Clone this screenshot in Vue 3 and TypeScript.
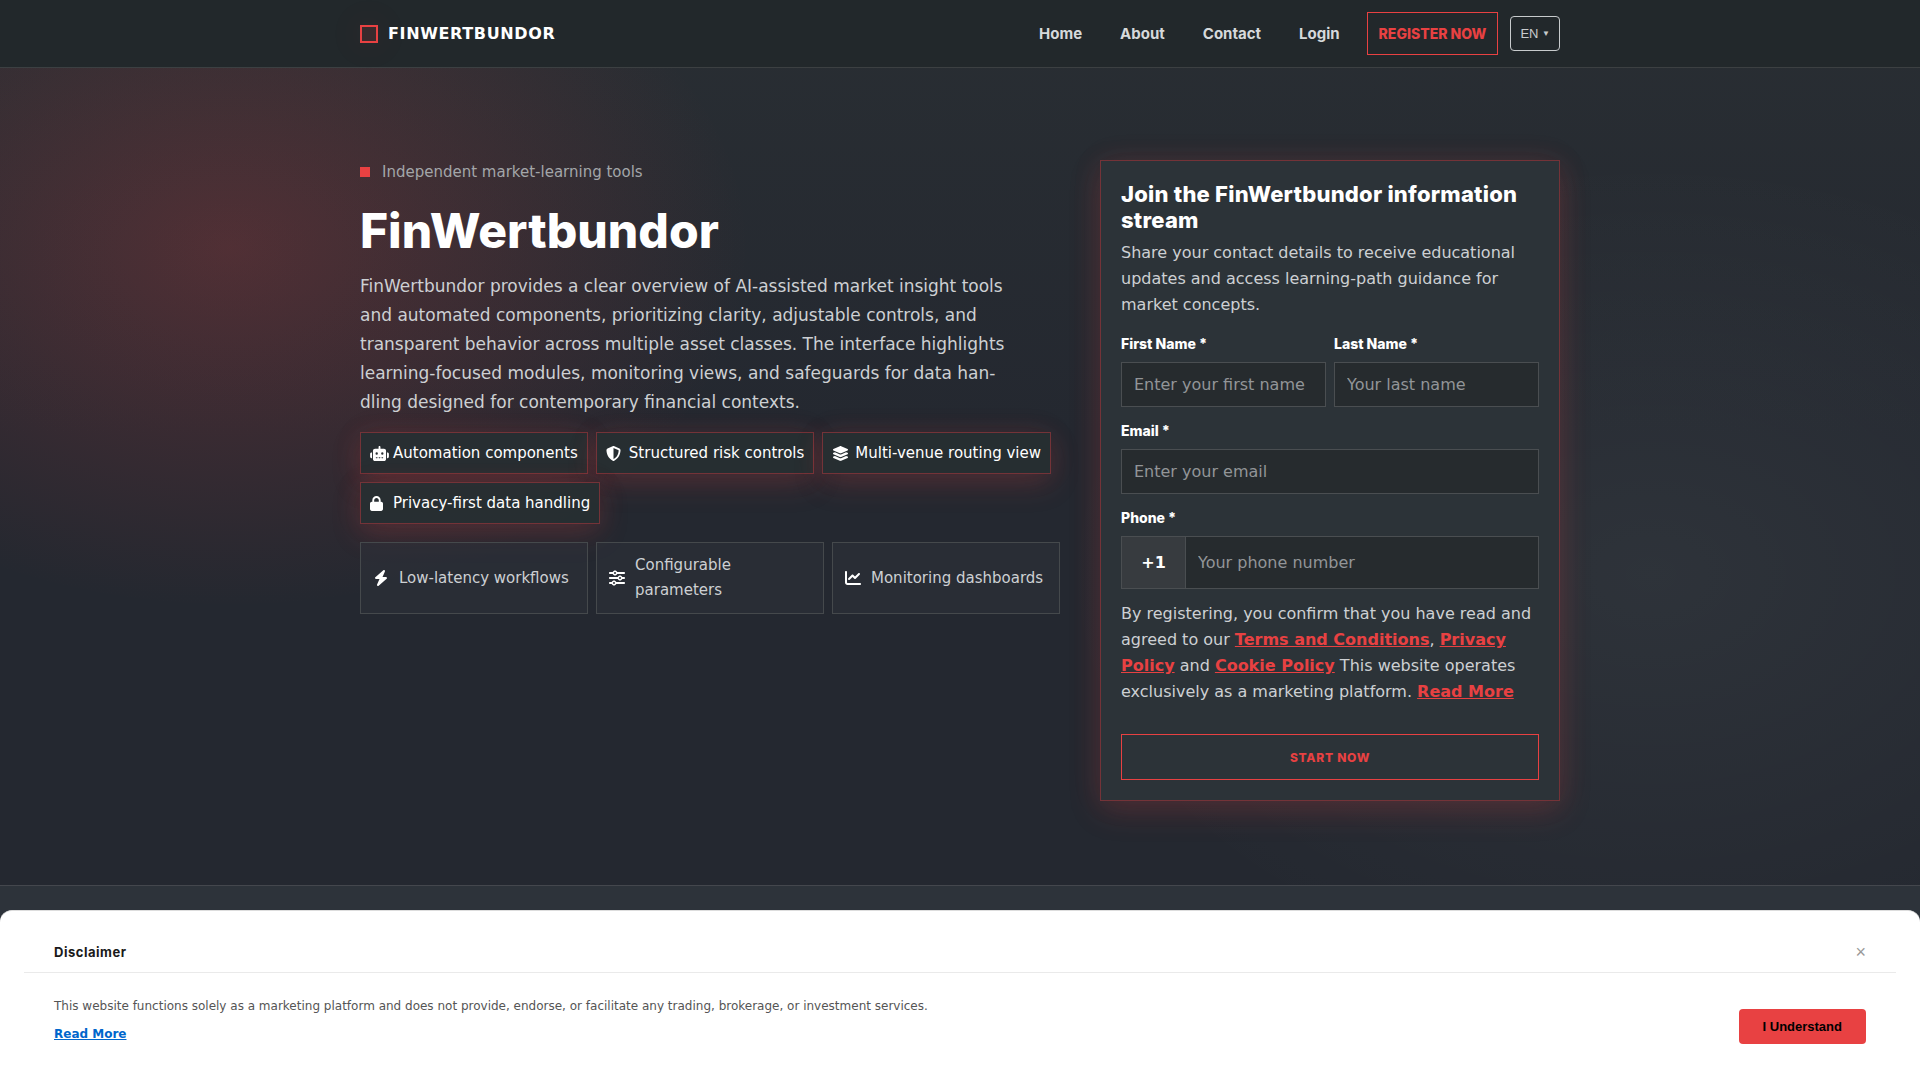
<script setup lang="ts">
import { ref } from 'vue'

interface Badge {
  icon: string
  box: string
  width: number
  label: string
}

const nav = ['Home', 'About', 'Contact', 'Login']

const chips: Badge[] = [
  {
    label: 'Automation components',
    box: '0 0 640 512',
    width: 19,
    icon: 'M320 0c17.7 0 32 14.300 32 32V96H472c39.800 0 72 32.200 72 72V440c0 39.800-32.200 72-72 72H168c-39.800 0-72-32.200-72-72V168c0-39.800 32.200-72 72-72H288V32c0-17.700 14.300-32 32-32zM208 384c-8.800 0-16 7.200-16 16s7.200 16 16 16h32c8.800 0 16-7.200 16-16s-7.200-16-16-16H208zm96 0c-8.800 0-16 7.200-16 16s7.200 16 16 16h32c8.800 0 16-7.200 16-16s-7.200-16-16-16H304zm96 0c-8.800 0-16 7.200-16 16s7.200 16 16 16h32c8.800 0 16-7.200 16-16s-7.200-16-16-16H400zM264 256a40 40 0 1 0-80 0 40 40 0 1 0 80 0zm152 40a40 40 0 1 0 0-80 40 40 0 1 0 0 80zM48 224H64V416H48c-26.500 0-48-21.500-48-48V272c0-26.500 21.500-48 48-48zm544 0c26.500 0 48 21.500 48 48v96c0 26.500-21.500 48-48 48H576V224h16z',
  },
  {
    label: 'Structured risk controls',
    box: '0 0 512 512',
    width: 15,
    icon: 'M256 0c4.600 0 9.200 1 13.400 2.900L457.700 82.800c22 9.300 38.400 31 38.300 57.200c-.5 99.200-41.300 280.700-213.600 363.200c-16.700 8-36.100 8-52.800 0C57.300 420.700 16.500 239.200 16 140c-.1-26.200 16.300-47.900 38.300-57.200L242.700 2.900C246.800 1 251.400 0 256 0zm0 66.800V444.800C394 378 431.100 230.100 432 141.400L256 66.800z',
  },
  {
    label: 'Multi-venue routing view',
    box: '0 0 576 512',
    width: 17,
    icon: 'M264.500 5.200c14.900-6.900 32.100-6.900 47 0l218.600 101c8.500 3.900 13.900 12.400 13.900 21.800s-5.400 17.900-13.900 21.800l-218.600 101c-14.900 6.900-32.100 6.900-47 0L45.900 149.800C37.400 145.800 32 137.300 32 128s5.400-17.900 13.900-21.800L264.500 5.200zM476.900 209.600l53.200 24.600c8.500 3.900 13.900 12.400 13.900 21.800s-5.400 17.900-13.900 21.800l-218.600 101c-14.900 6.900-32.100 6.900-47 0L45.900 277.800C37.400 273.800 32 265.300 32 256s5.400-17.900 13.900-21.800l53.200-24.600 152 70.200c23.400 10.800 50.400 10.800 73.800 0l152-70.200zm-152 198.200l152-70.200 53.200 24.600c8.500 3.900 13.900 12.400 13.900 21.800s-5.400 17.900-13.900 21.800l-218.600 101c-14.900 6.900-32.100 6.900-47 0L45.900 405.800C37.400 401.800 32 393.300 32 384s5.400-17.900 13.900-21.800l53.200-24.600 152 70.200c23.400 10.800 50.400 10.800 73.800 0z',
  },
  {
    label: 'Privacy-first data handling',
    box: '0 0 448 512',
    width: 13,
    icon: 'M144 144v48H304V144c0-44.200-35.800-80-80-80s-80 35.800-80 80zM80 192V144C80 64.500 144.500 0 224 0s144 64.500 144 144v48h16c35.300 0 64 28.700 64 64V448c0 35.300-28.700 64-64 64H64c-35.300 0-64-28.700-64-64V256c0-35.300 28.700-64 64-64H80z',
  },
]

const tiles: Badge[] = [
  {
    label: 'Low-latency workflows',
    box: '0 0 448 512',
    width: 14,
    icon: 'M349.400 44.600c5.900-13.700 1.500-29.700-10.600-38.500s-28.600-8-39.900 1.800l-256 224c-10 8.800-13.600 22.900-8.900 35.300S50.700 288 64 288H175.500L98.600 467.400c-5.900 13.700-1.500 29.700 10.600 38.500s28.600 8 39.900-1.800l256-224c10-8.800 13.600-22.900 8.900-35.300s-16.600-20.700-30-20.700H272.500L349.400 44.600z',
  },
  {
    label: 'Configurable parameters',
    box: '0 0 512 512',
    width: 16,
    icon: 'M0 416c0 17.700 14.300 32 32 32l54.700 0c12.300 28.300 40.500 48 73.300 48s61-19.700 73.300-48L480 448c17.700 0 32-14.300 32-32s-14.300-32-32-32l-246.700 0c-12.300-28.300-40.500-48-73.300-48s-61 19.700-73.300 48L32 384c-17.700 0-32 14.300-32 32zm128 0a32 32 0 1 1 64 0 32 32 0 1 1-64 0zM320 256a32 32 0 1 1 64 0 32 32 0 1 1-64 0zm32-80c-32.800 0-61 19.700-73.300 48L32 224c-17.700 0-32 14.300-32 32s14.300 32 32 32l246.700 0c12.300 28.300 40.500 48 73.300 48s61-19.700 73.300-48l54.700 0c17.700 0 32-14.300 32-32s-14.300-32-32-32l-54.700 0c-12.300-28.300-40.500-48-73.300-48zM192 128a32 32 0 1 1 0-64 32 32 0 1 1 0 64zm73.300-64C253 35.700 224.800 16 192 16s-61 19.700-73.300 48L32 64C14.300 64 0 78.300 0 96s14.300 32 32 32l86.700 0c12.300 28.300 40.500 48 73.300 48s61-19.700 73.300-48L480 128c17.700 0 32-14.300 32-32s-14.300-32-32-32L265.300 64z',
  },
  {
    label: 'Monitoring dashboards',
    box: '0 0 512 512',
    width: 16,
    icon: 'M64 64c0-17.700-14.300-32-32-32S0 46.300 0 64V400c0 44.200 35.800 80 80 80H480c17.700 0 32-14.300 32-32s-14.300-32-32-32H80c-8.800 0-16-7.200-16-16V64zm406.600 86.600c12.500-12.500 12.500-32.800 0-45.300s-32.800-12.500-45.300 0L320 210.700l-57.400-57.400c-12.500-12.500-32.800-12.500-45.300 0l-112 112c-12.500 12.500-12.500 32.800 0 45.300s32.800 12.500 45.300 0L240 221.300l57.400 57.400c12.500 12.500 32.800 12.500 45.300 0l128-128z',
  },
]

const firstName = ref('')
const lastName = ref('')
const email = ref('')
const phone = ref('')
const showDisclaimer = ref(true)
</script>

<template>
  <div class="page">
    <header class="topbar">
      <div class="wrap topbar-row">
        <a class="brand" href="#"><span class="brand-mark"></span>FINWERTBUNDOR</a>
        <nav class="nav">
          <div class="nav-links">
            <a v-for="item in nav" :key="item" class="nav-link" href="#">{{ item }}</a>
          </div>
          <a class="register" href="#">REGISTER NOW</a>
          <button class="lang" type="button">EN <span class="caret">▼</span></button>
        </nav>
      </div>
    </header>

    <main class="hero">
      <div class="wrap hero-grid">
        <section class="intro">
          <p class="eyebrow"><span class="dot"></span>Independent market-learning tools</p>
          <h1>FinWertbundor</h1>
          <p class="lead">
            FinWertbundor provides a clear overview of AI-assisted market insight tools and automated
            components, prioritizing clarity, adjustable controls, and transparent behavior across
            multiple asset classes. The interface highlights learning-focused modules, monitoring
            views, and safeguards for data han&shy;dling designed for contemporary financial contexts.
          </p>
          <ul class="chips">
            <li v-for="chip in chips" :key="chip.label" class="chip">
              <span class="chip-icon">
                <svg :viewBox="chip.box" :width="chip.width" height="15" aria-hidden="true"><path :d="chip.icon" /></svg>
              </span>
              {{ chip.label }}
            </li>
          </ul>
          <ul class="tiles">
            <li v-for="tile in tiles" :key="tile.label" class="tile">
              <span class="tile-icon">
                <svg :viewBox="tile.box" :width="tile.width" height="16" aria-hidden="true"><path :d="tile.icon" /></svg>
              </span>
              <span>{{ tile.label }}</span>
            </li>
          </ul>
        </section>

        <form class="card" @submit.prevent>
          <h2>Join the FinWertbundor information stream</h2>
          <p class="copy">
            Share your contact details to receive educational updates and access learning-path guidance
            for market concepts.
          </p>
          <div class="name-row">
            <div class="field">
              <label for="first">First Name *</label>
              <input id="first" v-model="firstName" class="box" type="text" placeholder="Enter your first name" />
            </div>
            <div class="field">
              <label for="last">Last Name *</label>
              <input id="last" v-model="lastName" class="box" type="text" placeholder="Your last name" />
            </div>
          </div>
          <div class="field">
            <label for="email">Email *</label>
            <input id="email" v-model="email" class="box" type="email" placeholder="Enter your email" />
          </div>
          <div class="field">
            <label for="phone">Phone *</label>
            <div class="phone">
              <span class="prefix">+1</span>
              <input id="phone" v-model="phone" type="tel" placeholder="Your phone number" />
            </div>
          </div>
          <p class="copy terms">
            By registering, you confirm that you have read and agreed to our
            <a href="#">Terms and Conditions</a>, <a href="#">Privacy Policy</a> and
            <a href="#">Cookie Policy</a> This website operates exclusively as a marketing platform.
            <a href="#">Read More</a>
          </p>
          <button class="submit" type="submit">START NOW</button>
        </form>
      </div>
    </main>

    <section class="next"></section>

    <aside v-if="showDisclaimer" class="disclaimer">
      <div class="disclaimer-head">
        <h3>Disclaimer</h3>
        <button class="close" type="button" aria-label="Close" @click="showDisclaimer = false">×</button>
      </div>
      <div class="disclaimer-body">
        <div>
          <p>
            This website functions solely as a marketing platform and does not provide, endorse, or
            facilitate any trading, brokerage, or investment services.
          </p>
          <a href="#">Read More</a>
        </div>
        <button class="accept" type="button" @click="showDisclaimer = false">I Understand</button>
      </div>
    </aside>
  </div>
</template>

<style>
body {
  background: #242830;
}
</style>

<style scoped>
* {
  box-sizing: border-box;
  margin: 0;
}

.page {
  --red: #e84142;
  --soft: #cdd0d3;
  --glow: 0 10px 30px rgba(232, 65, 66, 0.18), 0 0 30px rgba(232, 65, 66, 0.08);
  --display: Inter, "Liberation Sans", sans-serif;
  display: flex;
  flex-direction: column;
  min-height: 100vh;
  background: linear-gradient(#292e33, #242830 40%);
  color: var(--soft);
  font: 16px/26px "DejaVu Sans", sans-serif;
}

ul {
  list-style: none;
  padding: 0;
}

svg {
  display: block;
  flex: none;
  fill: #fff;
}

.wrap {
  width: 100%;
  max-width: 1248px;
  margin: 0 auto;
  padding: 0 24px;
}

.topbar {
  background: #22282b;
  border-bottom: 1px solid #3c4042;
}

.topbar-row {
  display: flex;
  align-items: center;
  justify-content: space-between;
  padding-top: 12px;
  padding-bottom: 12px;
}

.brand {
  display: flex;
  align-items: center;
  gap: 10px;
  color: #fff;
  font-weight: 700;
  letter-spacing: 0.04em;
  line-height: 24px;
  text-decoration: none;
}

.brand-mark {
  width: 18px;
  height: 18px;
  border: 2px solid var(--red);
  background: rgba(232, 65, 66, 0.12);
  box-shadow: 0 0 36px rgba(232, 65, 66, 0.12);
}

.nav {
  display: flex;
  align-items: center;
  font: 700 15px/25px var(--display);
}

.nav-links {
  display: flex;
  gap: 38px;
  margin-right: 27px;
}

.nav-link {
  color: #d6d9db;
  text-decoration: none;
}

.register {
  padding: 8px 11px;
  border: 1px solid var(--red);
  color: var(--red);
  font-size: 14px;
  font-weight: 800;
  text-decoration: none;
}

.lang {
  height: 35px;
  margin-left: 12px;
  padding: 0 9px;
  border: 1px solid #c8cbcd;
  border-radius: 4px;
  background: none;
  color: #c8cbcd;
  font: 13px "Liberation Sans", sans-serif;
}

.caret {
  font-size: 8px;
  vertical-align: 2px;
}

.hero {
  padding: 92px 0 84px;
  background:
    radial-gradient(520px 360px at 12% 22%, rgba(232, 65, 66, 0.22), transparent),
    radial-gradient(600px 420px at 86% 62%, rgba(230, 255, 240, 0.05), transparent);
}

.hero-grid {
  display: grid;
  grid-template-columns: minmax(0, 1fr) 460px;
  gap: 40px;
  align-items: start;
}

.eyebrow {
  display: flex;
  align-items: center;
  gap: 12px;
  color: #a3a6a9;
  font-size: 15px;
  line-height: 24px;
}

.dot {
  width: 10px;
  height: 10px;
  background: var(--red);
}

h1 {
  margin: 20px 0 15px;
  color: #fff;
  font: 800 48px/53px var(--display);
}

.lead {
  max-width: 656px;
  font-size: 17px;
  line-height: 29px;
}

.chips {
  display: flex;
  flex-wrap: wrap;
  gap: 8px;
  margin-top: 15px;
}

.chip {
  display: flex;
  align-items: center;
  gap: 8px;
  padding: 8px 9px;
  border: 1px solid #743338;
  background: rgba(39, 47, 50, 0.92);
  box-shadow: var(--glow);
  color: #fff;
  font-size: 15px;
  line-height: 24px;
}

.chip-icon {
  display: flex;
  width: 15px;
}

.tiles {
  display: grid;
  grid-template-columns: repeat(3, minmax(0, 1fr));
  gap: 8px;
  margin-top: 18px;
}

.tile {
  display: flex;
  align-items: center;
  gap: 10px;
  padding: 10px 12px;
  border: 1px solid #45494c;
  background: rgba(45, 50, 58, 0.55);
  font-size: 15px;
  line-height: 25px;
}

.tile-icon {
  display: flex;
  flex: none;
  justify-content: center;
  width: 16px;
}

.card {
  padding: 20px;
  border: 1px solid #743338;
  background: #2c3338;
  box-shadow: var(--glow);
}

h2 {
  color: #fff;
  font: 800 22px/26px var(--display);
  letter-spacing: 0.01em;
}

.copy {
  margin-top: 7px;
}

.name-row {
  display: grid;
  grid-template-columns: 1fr 1fr;
  gap: 8px;
  padding-top: 2px;
}

.field {
  margin-top: 14px;
}

label {
  display: block;
  margin-bottom: 8px;
  color: #fff;
  font: 800 14px/20px var(--display);
}

input {
  width: 100%;
  min-width: 0;
  padding: 0 12px;
  border: 0;
  background: none;
  color: #fff;
  font: 16px "DejaVu Sans", sans-serif;
}

input::placeholder {
  color: #929598;
  opacity: 1;
}

.box {
  display: block;
  height: 45px;
  border: 1px solid #4a4e51;
  background: #262b2e;
}

.phone {
  display: flex;
  height: 53px;
  border: 1px solid #4a4e51;
  background: #262b2e;
}

.prefix {
  display: flex;
  flex: none;
  align-items: center;
  justify-content: center;
  width: 64px;
  border-right: 1px solid #4a4e51;
  background: #373b3f;
  color: #fff;
  font-weight: 700;
}

.terms {
  margin-top: 12px;
}

.terms a {
  color: var(--red);
  font-weight: 700;
}

.submit {
  display: block;
  width: 100%;
  height: 46px;
  margin-top: 29px;
  border: 1px solid var(--red);
  background: none;
  color: var(--red);
  font: 800 12px var(--display);
  letter-spacing: 0.06em;
}

.next {
  flex: 1;
  border-top: 1px solid #44474d;
  background: #2d333a;
}

.disclaimer {
  position: fixed;
  right: 0;
  bottom: 0;
  left: 0;
  padding: 24px 24px 36px;
  border-top: 1px solid #ddd;
  border-radius: 12px 12px 0 0;
  background: #fff;
  color: #555;
  font-size: 12px;
  line-height: 20px;
}

.disclaimer-head {
  display: flex;
  align-items: center;
  justify-content: space-between;
  padding: 7px 30px 10px;
  border-bottom: 1px solid #eaeaea;
}

h3 {
  color: #1a1a1a;
  font: 700 13px/20px var(--display);
  letter-spacing: 0.04em;
}

.close {
  padding: 0;
  border: 0;
  background: none;
  color: #999;
  font: 18px/20px "Liberation Sans", sans-serif;
}

.disclaimer-body {
  display: flex;
  align-items: flex-end;
  justify-content: space-between;
  gap: 24px;
  padding: 23px 30px 0;
}

.disclaimer-body a {
  display: inline-block;
  margin-top: 8px;
  color: #0066cc;
  font-weight: 700;
}

.accept {
  flex: none;
  height: 35px;
  padding: 0 24px;
  border: 0;
  border-radius: 4px;
  background: var(--red);
  color: #000;
  font: 700 13px "Liberation Sans", sans-serif;
}
</style>
